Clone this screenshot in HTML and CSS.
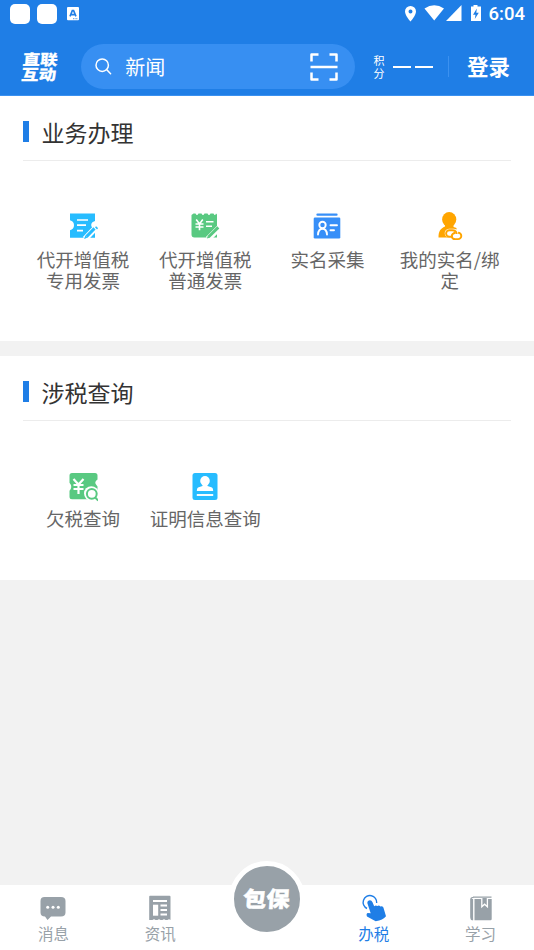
FILE: index.html
```html
<!DOCTYPE html>
<html lang="zh-CN">
<head>
<meta charset="utf-8">
<title>办税</title>
<link rel="stylesheet" href="styles.css">
</head>
<body>
<div class="app">
  <header class="top">
    <div class="status">
      <i class="blob"></i><i class="blob"></i>
      <svg class="lang" width="12" height="14" viewBox="0 0 12 14"><rect width="12" height="13.3" rx="1" fill="#fff"/><path d="M3 9.4 5.3 3.6h1.3L9 9.4M4 7.6h4" fill="none" stroke="#1f7ee6" stroke-width="1.6"/><path d="M6 11.7h5" stroke="#1f7ee6" stroke-width=".8" stroke-dasharray="1 .6"/></svg>
      <svg class="sys" width="78" height="18" viewBox="0 0 78 18" fill="#fff">
        <path fill-rule="evenodd" d="M5.500 1A5.400 5.400 0 0 0 0 6.400C0 10.400 5.500 16.500 5.500 16.500S11 10.400 11 6.400A5.400 5.400 0 0 0 5.500 1Zm0 3.500a2 2 0 1 1 0 4 2 2 0 0 1 0-4Z"/>
        <path d="M19.500 3.500Q29.200-3.200 39 3.500L29.200 15.500Z"/>
        <path d="M56.500 0v16H41Z"/>
        <path fill-rule="evenodd" d="M66 1.500h2.500V0h4v1.500H76V16H66ZM71.800 3.600 68 9.700h2.500l-.7 4.200 4-6.200h-2.500Z"/>
      </svg>
      <span class="clock">6:04</span>
    </div>
    <div class="bar">
      <div class="logo">直联<br>互动</div>
      <div class="search">
        <svg width="17" height="17" viewBox="0 0 17 17" fill="none" stroke="#fff" stroke-width="1.500" stroke-linecap="round"><circle cx="7.200" cy="7.200" r="6.200"/><path d="m11.800 11.800 3.800 4"/></svg>
        <span>新闻</span>
        <svg class="scan" width="28" height="28" viewBox="0 0 28 28" fill="none" stroke="#fff" stroke-width="2.500" stroke-linejoin="round"><path d="M1.500 8.500v-7h7M19.500 1.500h7v7M26.500 19.500v7h-7M8.500 26.500h-7v-7M.5 14h27"/></svg>
      </div>
      <div class="points"><span>积</span><span>分</span></div>
      <div class="dashes"><i></i><i></i></div>
      <div class="login"><span>登录</span></div>
    </div>
  </header>

  <section class="card first">
    <h2><span>业务办理</span></h2>
    <div class="grid">
      <div class="item">
        <svg width="30" height="30" viewBox="0 0 30 30"><path fill="#27bcff" d="M2 1.500h25V9q-3.800 1-3.800 4t3.800 3.500v9.200H2v-7.500q4-1 4-5t-4-5Z"/><path d="M9 8h11M9 13.200h9M9 18.700h6" stroke="#fff" stroke-width="1.700"/><path d="m17 27 10.500-11" stroke="#fff" stroke-width="6"/><path d="m18.500 24.600 8-8.200" stroke="#27bcff" stroke-width="3"/><path d="m16 27 1.400-3.600 2.300 2.200Z M27 15.300l1.100-1.100 2 1.800-1.100 1.500Z" fill="#27bcff"/></svg>
        <span>代开增值税<br>专用发票</span>
      </div>
      <div class="item">
        <svg width="30" height="30" viewBox="0 0 30 30"><path fill="#59c981" d="M3.500 1.500h2q1.500 3 3 0h3q1.500 3 3 0h3q1.500 3 3 0h3q1.500 3 2.500 0l1 1V25.500H4.500q-3 0-3-3V3Z"/><path d="m6.200 7.500 3.300 4.400 3.300-4.400M5.500 12h8M5.500 15h8M9.500 12v6.300M16 9.700h7.500M16 14.200h6" fill="none" stroke="#fff" stroke-width="1.600"/><path d="m18 27 11-11" stroke="#fff" stroke-width="6"/><path d="m18.500 25 9.800-9.600" stroke="#59c981" stroke-width="2.900"/><path d="m16.800 26.500 1-2.600 1.900 1.800Z" fill="#59c981"/></svg>
        <span>代开增值税<br>普通发票</span>
      </div>
      <div class="item">
        <svg width="30" height="30" viewBox="0 0 30 30"><path d="M5.500 2.700h19" stroke="#378ff8" stroke-width="2.300" stroke-linecap="round"/><rect x="1.700" y="5.500" width="26.600" height="21" rx="1.300" fill="#378ff8"/><g fill="none" stroke="#fff" stroke-width="1.900" stroke-linecap="round"><circle cx="10.500" cy="13" r="3.200"/><path d="M6 22.500q.4-5.800 4.500-5.800t4.500 5.800M18.500 13.300H25M18.500 18.300H22"/></g></svg>
        <span>实名采集</span>
      </div>
      <div class="item">
        <svg width="30" height="30" viewBox="0 0 30 30"><ellipse cx="14.200" cy="7.500" rx="7.100" ry="7.500" fill="#ffa500"/><path d="M10 11h8.500v4l3 1v9.500H3.500C3.500 19 5.500 16.500 10 14.500Z" fill="#ffa500"/><path d="M14 16.800h5q3 0 4.500 2.500 5.500.4 5.500 4.700 0 5-6 5h-3q-3 0-4.500-2.800-5.800-.7-5.800-4.900 0-4 4.300-4.500Z" fill="#fff"/><g fill="none" stroke="#ffa500" stroke-width="1.900"><path d="M17.500 24.700h-3.200a3.200 3.200 0 0 1 0-6.400h3q4 0 4.400 3.700"/><path d="M20.500 20.700q-3.500.6-3.700 3.200 0 3.200 3.500 3.200h2.800a3.200 3.200 0 0 0 0-6.400"/></g></svg>
        <span>我的实名/绑<br>定</span>
      </div>
    </div>
  </section>

  <section class="card second">
    <h2><span>涉税查询</span></h2>
    <div class="grid">
      <div class="item">
        <svg width="30" height="30" viewBox="0 0 30 30"><path fill="#59c981" d="M4 1h23q2.500 0 2.500 2.500v4q-3.500 2.500-1.500 5l1.500 2v12.700H4q-2.500 0-2.500-2.500v-6q3.500-4 0-8V3.500Q1.500 1 4 1Z"/><path d="m5.500 7 5 5.500 5-5.500M5.500 13h10M5.500 17h10M10.500 12v10" fill="none" stroke="#fff" stroke-width="2.200"/><circle cx="23.300" cy="21.500" r="7.300" fill="#fff"/><path d="m25 24 5 5" stroke="#fff" stroke-width="5"/><circle cx="23.800" cy="21.800" r="4.900" fill="none" stroke="#59c981" stroke-width="2"/><path d="m27.200 25.500 3 3" stroke="#59c981" stroke-width="2"/></svg>
        <span>欠税查询</span>
      </div>
      <div class="item">
        <svg width="30" height="30" viewBox="0 0 30 30"><rect x="2.500" y="1" width="25" height="27" rx="2.500" fill="#27bcff"/><circle cx="15" cy="8.900" r="4.800" fill="#fff"/><path d="M12.500 12h5v2l4.500 1.500q1.200.5 1.200 3.500H6.800q0-3 1.200-3.500l4.500-1.500Z" fill="#fff"/><path d="M6.800 23h16.400" stroke="#fff" stroke-width="1.900"/></svg>
        <span>证明信息查询</span>
      </div>
    </div>
  </section>

  <nav class="tabs">
    <div class="tab">
      <svg width="28" height="28" viewBox="0 0 28 28"><path fill="#98a1a8" d="M5.500 3h16.500q4.500 0 4.500 4v11.500q0 4-4.500 4H12L8.500 26 6 22.500q-4.500 0-4.500-4V7q0-4 4-4Z"/><g fill="#fff"><circle cx="8.700" cy="13.300" r="1.500"/><circle cx="14" cy="13.300" r="1.500"/><circle cx="19.300" cy="13.300" r="1.500"/></g></svg>
      <span>消息</span>
    </div>
    <div class="tab">
      <svg width="28" height="28" viewBox="0 0 28 28"><path fill="#98a1a8" d="M4 1.800h19.500q1 0 1 1V26q-1.500-1.700-3 0h-2q-1.500-1.700-3 0h-2q-1.500-1.700-3 0h-2q-1.500-1.700-3 0H3.200V2.800q0-1 .8-1Z"/><path d="M7 7h14M14.500 11.500H21M14.500 16H21M14.500 20.500H21" stroke="#fff" stroke-width="1.800"/><rect x="7" y="10.700" width="5.200" height="11" fill="#fff"/></svg>
      <span>资讯</span>
    </div>
    <div class="tab center"><div class="badge"><b>包保</b></div></div>
    <div class="tab active">
      <svg width="28" height="28" viewBox="0 0 28 28"><path d="M7 14.500A6.800 6.800 0 1 1 16.700 9" fill="none" stroke="#1f7ee6" stroke-width="1.400"/><path fill="#1f7ee6" d="M7.300 9Q7.500 6.300 10 6.300q1.700 0 2.500 2l1.700 4q1.500-1.500 3.200-.2 1.500-1.100 3 .3 2-.6 3 1.100l2.600 8.800q-3 3.800-10.300 4.900L7 22.500q-1.200-2.500.7-3.500l3 .2Z"/></svg>
      <span>办税</span>
    </div>
    <div class="tab">
      <svg width="28" height="28" viewBox="0 0 28 28"><path d="M6 3.200h18.500M6.500 3.400Q4 3.500 4 5v18q0 2 2 2.500" fill="none" stroke="#98a1a8" stroke-width="1.300"/><path d="M3.500 5h2.600v21.200H5q-1.500 0-1.500-2Z M7.500 5h17.200v20q0 1.200-1.200 1.200h-16Z" fill="#98a1a8"/><path d="M14.800 4v8.800l2.800-2.600 2.800 2.600V4" fill="#98a1a8" stroke="#fff" stroke-width="1.300"/></svg>
      <span>学习</span>
    </div>
  </nav>
</div>
</body>
</html>
```
FILE: styles.css
```css
* { box-sizing: border-box; }
body { margin: 0; font-family: "Noto Sans CJK SC", sans-serif; }
svg { display: block; flex: none; }
.app { width: 534px; height: 950px; display: flex; flex-direction: column; background: #f2f2f2; overflow: hidden; }

.top { height: 96px; background: #1f7ee6; border-bottom: 1px solid #3b91f0; color: #fff; flex: none; }
.status { height: 28px; display: flex; align-items: center; padding: 0 9px 0 10px; }
.blob { width: 20px; height: 20px; border-radius: 5px; background: #fff; margin-right: 7px; margin-top: -1px; }
.blob:nth-child(2) { margin-right: 10px; }
.lang { margin-top: -1px; }
.sys { margin-left: auto; margin-top: -1px; }
.clock { font: 500 18.500px/28px Roboto, sans-serif; margin-left: 6px; }
.bar { height: 67px; display: flex; align-items: center; padding: 10px 24px 0 22px; }
.logo { width: 59px; font-size: 17.500px; line-height: 18px; font-weight: 900; -webkit-text-stroke: .2px #fff; transform: skewX(-5deg) scaleY(.84); }
.search { width: 275px; height: 45px; border-radius: 23px; background: #378ff2; display: flex; align-items: center; padding: 0 17px 0 14px; font-size: 20px; line-height: 44px; }
.search span { margin-left: 13.500px; }
.scan { margin-left: auto; }
.points { font-size: 11px; line-height: 12.500px; margin-left: 18.500px; display: flex; flex-direction: column; }
.dashes { display: flex; gap: 4px; margin-left: 9px; padding-right: 14.500px; }
.dashes i { width: 18px; height: 2px; background: #fff; }
.login { font-size: 21.500px; line-height: 21px; font-weight: 700; padding-left: 18px; border-left: 1px solid #3b91f0; white-space: nowrap; }
.login span { display: block; margin-top: -1px; margin-bottom: 1px; }

.card { background: #fff; padding: 0 23px; flex: none; }
.first { height: 245px; }
.second { height: 224px; margin-top: 15px; }
h2 { margin: 0; height: 65px; padding-top: 9px; border-bottom: 1px solid #ececec; display: flex; align-items: center; font-size: 23px; line-height: 34px; font-weight: 400; color: #333; }
h2::before { content: ""; width: 6px; height: 21.500px; background: #1f7ee6; margin-right: 12.500px; margin-top: -2px; }
h2 span { margin-top: -2px; }
.grid { display: grid; grid-template-columns: repeat(4, 122.200px); margin: 51px -1px 0; }
.second .grid { margin-top: 50.500px; }
.item { display: flex; flex-direction: column; align-items: center; text-align: center; font-size: 18.500px; line-height: 21.500px; color: #666; white-space: nowrap; }
.item span { margin-top: 6.500px; }

.tabs { height: 65px; margin-top: auto; background: #fff; display: grid; grid-template-columns: repeat(5, 1fr); flex: none; }
.tab { display: flex; flex-direction: column; align-items: center; padding-top: 8.500px; font-size: 15.500px; line-height: 22px; color: #98a1a8; }
.active { color: #1f7ee6; }
.center { padding-top: 0; }
.badge { width: 76px; height: 76px; margin-top: -24px; border-radius: 50%; border: 5px solid #fff; background: #98a1a8; display: flex; flex: none; align-items: center; justify-content: center; color: #fff; }
.badge b { font-size: 23.500px; line-height: 30px; font-weight: 900; -webkit-text-stroke: .5px #fff; transform: translateY(-1px) skewX(-4deg) scaleY(.92); white-space: nowrap; }
```
